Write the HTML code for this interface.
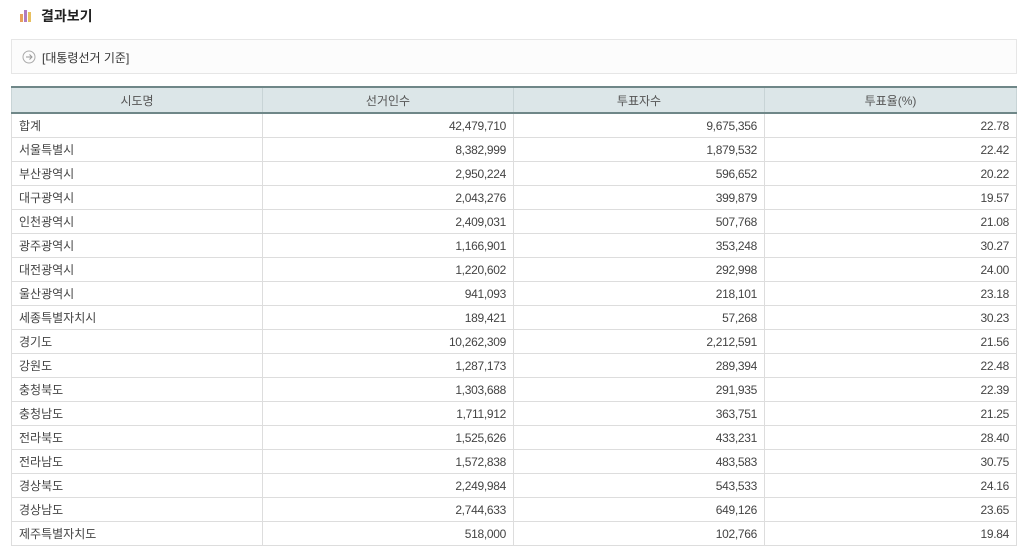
<!DOCTYPE html><html><head><meta charset="utf-8"><style>
body{margin:0;background:#fff;font-family:"Liberation Sans","Noto Sans CJK KR","NanumGothic",sans-serif;color:#333;width:1024px;height:549px;overflow:hidden;position:relative}
.title{position:absolute;left:41px;top:6px;font-size:14px;font-weight:bold;color:#222}
.icon{position:absolute;left:20px;top:9px}
.box{position:absolute;left:11px;top:39px;width:1004px;height:33px;border:1px solid #e6e6e6;background:#fcfcfc}
.box span{position:absolute;left:30px;top:9px;font-size:12px;color:#333}
.circ{position:absolute;left:10px;top:10px}
table{position:absolute;left:11px;top:86px;width:1005px;border-collapse:collapse;font-size:12px;table-layout:fixed}
th{height:24px;background:#dce6e8;font-weight:normal;color:#555;border-top:2px solid #6f8788;border-bottom:2px solid #6f8788;border-left:1px solid #c8d4d6;border-right:1px solid #c8d4d6;padding:0}
td{height:23px;border:1px solid #ddd;padding:0 7px;color:#444}
td.r{text-align:right;letter-spacing:-0.3px}
</style></head><body>
<svg class="icon" width="14" height="13"><rect x="0" y="5" width="3" height="8" fill="#e8a05c"/><rect x="4" y="1" width="3" height="12" fill="#b07cc0"/><rect x="8" y="3" width="3" height="10" fill="#e8c060"/></svg>
<div class="title">결과보기</div>
<div class="box"><svg class="circ" width="14" height="14"><circle cx="7" cy="7" r="6" fill="none" stroke="#aaa"/><path d="M4 7h6M7.5 4.5L10 7 7.5 9.5" fill="none" stroke="#999"/></svg><span>[대통령선거 기준]</span></div>
<table><colgroup><col style="width:251px"><col style="width:251px"><col style="width:251px"><col style="width:252px"></colgroup>
<tr><th>시도명</th><th>선거인수</th><th>투표자수</th><th>투표율(%)</th></tr>
<tr><td>합계</td><td class="r">42,479,710</td><td class="r">9,675,356</td><td class="r">22.78</td></tr>
<tr><td>서울특별시</td><td class="r">8,382,999</td><td class="r">1,879,532</td><td class="r">22.42</td></tr>
<tr><td>부산광역시</td><td class="r">2,950,224</td><td class="r">596,652</td><td class="r">20.22</td></tr>
<tr><td>대구광역시</td><td class="r">2,043,276</td><td class="r">399,879</td><td class="r">19.57</td></tr>
<tr><td>인천광역시</td><td class="r">2,409,031</td><td class="r">507,768</td><td class="r">21.08</td></tr>
<tr><td>광주광역시</td><td class="r">1,166,901</td><td class="r">353,248</td><td class="r">30.27</td></tr>
<tr><td>대전광역시</td><td class="r">1,220,602</td><td class="r">292,998</td><td class="r">24.00</td></tr>
<tr><td>울산광역시</td><td class="r">941,093</td><td class="r">218,101</td><td class="r">23.18</td></tr>
<tr><td>세종특별자치시</td><td class="r">189,421</td><td class="r">57,268</td><td class="r">30.23</td></tr>
<tr><td>경기도</td><td class="r">10,262,309</td><td class="r">2,212,591</td><td class="r">21.56</td></tr>
<tr><td>강원도</td><td class="r">1,287,173</td><td class="r">289,394</td><td class="r">22.48</td></tr>
<tr><td>충청북도</td><td class="r">1,303,688</td><td class="r">291,935</td><td class="r">22.39</td></tr>
<tr><td>충청남도</td><td class="r">1,711,912</td><td class="r">363,751</td><td class="r">21.25</td></tr>
<tr><td>전라북도</td><td class="r">1,525,626</td><td class="r">433,231</td><td class="r">28.40</td></tr>
<tr><td>전라남도</td><td class="r">1,572,838</td><td class="r">483,583</td><td class="r">30.75</td></tr>
<tr><td>경상북도</td><td class="r">2,249,984</td><td class="r">543,533</td><td class="r">24.16</td></tr>
<tr><td>경상남도</td><td class="r">2,744,633</td><td class="r">649,126</td><td class="r">23.65</td></tr>
<tr><td>제주특별자치도</td><td class="r">518,000</td><td class="r">102,766</td><td class="r">19.84</td></tr>
</table>
</body></html>
